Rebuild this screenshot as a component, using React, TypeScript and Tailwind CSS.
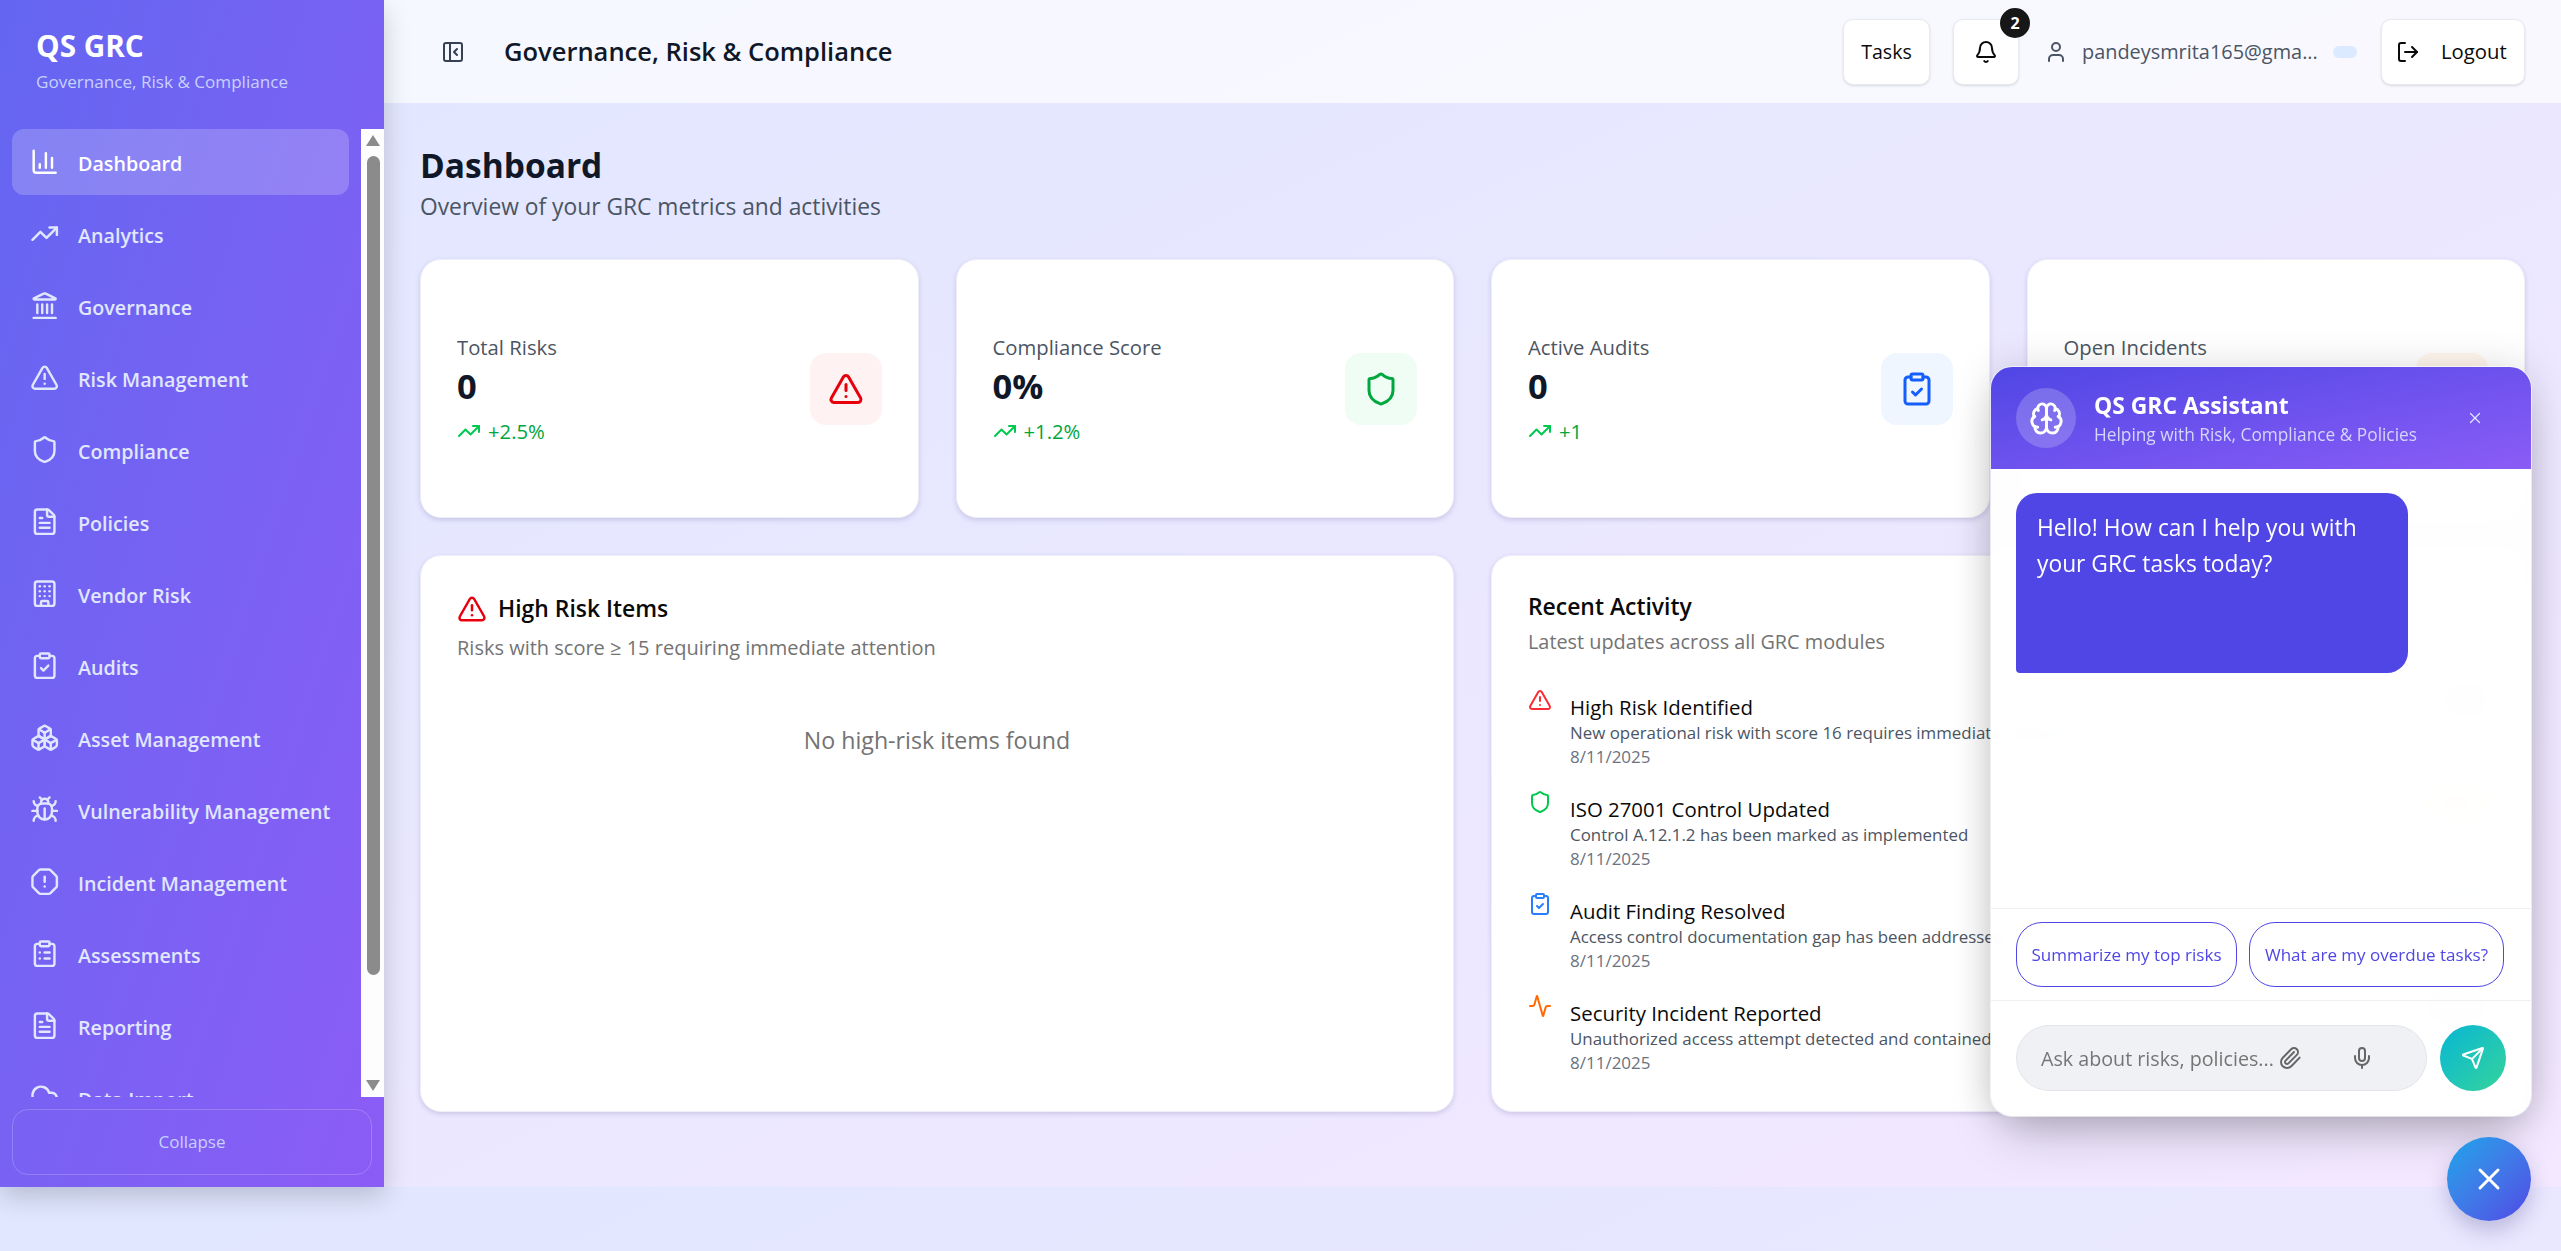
import React from "react";
import { ChartColumn, TrendingUp, Landmark, TriangleAlert, Shield, FileText, Building, ClipboardCheck, Boxes, Bug, OctagonAlert, ClipboardList, CloudUpload, PanelLeftClose, Bell, User, LogOut, Brain, Paperclip, Mic, Send, X, Activity } from "lucide-react";

const nav = [
  ["Dashboard", ChartColumn], ["Analytics", TrendingUp], ["Governance", Landmark], ["Risk Management", TriangleAlert],
  ["Compliance", Shield], ["Policies", FileText], ["Vendor Risk", Building], ["Audits", ClipboardCheck],
  ["Asset Management", Boxes], ["Vulnerability Management", Bug], ["Incident Management", OctagonAlert],
  ["Assessments", ClipboardList], ["Reporting", FileText], ["Data Import", CloudUpload],
] as const;

const stats = [
  { t: "Total Risks", v: "0", d: "+2.5%", I: TriangleAlert, bg: "bg-[#fef2f2]", c: "text-[#e7000b]" },
  { t: "Compliance Score", v: "0%", d: "+1.2%", I: Shield, bg: "bg-[#f0fdf4]", c: "text-[#00a63e]" },
  { t: "Active Audits", v: "0", d: "+1", I: ClipboardCheck, bg: "bg-[#eff6ff]", c: "text-[#155dfc]" },
  { t: "Open Incidents", v: "0", d: "-1", I: Activity, bg: "bg-[#fff7ed]", c: "text-[#f54900]" },
];

const activity = [
  { t: "High Risk Identified", d: "New operational risk with score 16 requires immediate attention", I: TriangleAlert, c: "text-[#fb2c36]", b: "bg-[#ffd0d0] w-[44px]" },
  { t: "ISO 27001 Control Updated", d: "Control A.12.1.2 has been marked as implemented", I: Shield, c: "text-[#00c950]", b: "bg-[#ffe6c8] w-[64px]" },
  { t: "Audit Finding Resolved", d: "Access control documentation gap has been addressed", I: ClipboardCheck, c: "text-[#2b7fff]", b: "bg-[#d0fadd] w-[44px]" },
  { t: "Security Incident Reported", d: "Unauthorized access attempt detected and contained", I: Activity, c: "text-[#ff6900]", b: "bg-[#ffd0d0] w-[64px]" },
];

function Sidebar() {
  return (
    <aside className="w-[384px] h-[1187px] shrink-0 flex flex-col bg-linear-to-br from-[#6366f1] to-[#8b5cf6] shadow-[0_10px_25px_rgba(0,0,0,0.18)] z-10">
      <div className="h-[129px] shrink-0 pl-[36px] pt-[27px]">
        <div className="text-[29.7px] leading-[38px] font-bold text-white">QS GRC</div>
        <div className="text-[17.1px] leading-[22px] mt-[6px] text-[#c7d2fe]">Governance, Risk &amp; Compliance</div>
      </div>
      <div className="flex-1 flex min-h-0">
        <nav className="flex-1 overflow-hidden flex flex-col gap-[6px] pl-[12px] pr-[12px]">
          {nav.map(([label, Icon], i) => (
            <div key={label} className={`h-[66px] shrink-0 flex items-center gap-[18.67px] pl-[18px] rounded-[12px] text-[19.7px] font-semibold ${i === 0 ? "bg-white/20 text-white" : "text-[#e0e7ff]"}`}>
              <Icon className="size-[29.33px] shrink-0" strokeWidth={2} />
              <span className="relative top-[1.5px]">{label}</span>
            </div>
          ))}
        </nav>
        <div className="w-[23px] shrink-0 bg-[#fdfdfe] flex flex-col items-center pl-[1px]">
          <div className="mt-[6px] w-0 h-0 border-x-[7px] border-x-transparent border-b-[11px] border-b-[#8b8b8b]" />
          <div className="mt-[10px] w-[13px] h-[819px] rounded-full bg-[#8b8b8b]" />
          <div className="mt-[105px] w-0 h-0 border-x-[7px] border-x-transparent border-t-[11px] border-t-[#8b8b8b]" />
        </div>
      </div>
      <div className="h-[90px] shrink-0 px-[12px] pt-[12px]">
        <button className="w-full h-[66px] rounded-[16px] border border-white/20 text-[17px] text-[#c7d2fe]">Collapse</button>
      </div>
    </aside>
  );
}

function Header() {
  return (
    <header className="h-[103px] shrink-0 bg-white/70 flex items-center pl-[57px] pr-[36px]">
      <PanelLeftClose className="size-[24px] text-[#364153]" strokeWidth={2} />
      <h1 className="ml-[39px] text-[25.5px] font-semibold text-[#101828]">Governance, Risk &amp; Compliance</h1>
      <div className="ml-auto flex items-center">
        <button className="w-[87px] h-[66px] rounded-[10px] bg-white border border-[#e9e9f2] shadow-sm text-[19.6px] font-medium text-[#0a0a0a]">Tasks</button>
        <button className="relative ml-[23px] w-[66px] h-[66px] rounded-[10px] bg-white border border-[#e9e9f2] shadow-sm flex items-center justify-center">
          <Bell className="size-[24px] text-[#0a0a0a]" />
          <span className="absolute top-[-12px] right-[-12px] size-[30px] rounded-full bg-[#171717] text-white text-[16px] font-bold flex items-center justify-center">2</span>
        </button>
        <User className="ml-[25px] size-[24px] text-[#4b5563]" />
        <span className="ml-[14px] w-[236px] text-[19.9px] text-[#4b5563] whitespace-nowrap">pandeysmrita165@gma...</span>
        <span className="ml-[15px] w-[24px] h-[12px] rounded-full bg-[#dbeafe]" />
        <button className="ml-[24px] w-[144px] h-[66px] rounded-[10px] bg-white border border-[#e9e9f2] shadow-sm flex items-center pl-[14px] gap-[21px] text-[20.3px] font-medium text-[#0a0a0a]">
          <LogOut className="size-[24px]" />
          <span>Logout</span>
        </button>
      </div>
    </header>
  );
}

function Stat({ s }: { s: (typeof stats)[number] }) {
  return (
    <div className="h-[259px] rounded-[21px] bg-white border border-[#f0eff8] shadow-[0_2px_5px_rgba(60,50,120,0.18)] pl-[36px] pr-[36px] flex items-center justify-between">
      <div>
        <div className="text-[20.3px] leading-[26px] font-medium text-[#4b5563]">{s.t}</div>
        <div className="text-[34.5px] leading-[42px] mt-[5px] font-bold text-[#101828]">{s.v}</div>
        <div className="mt-[11px] flex items-center gap-[7px] text-[20.3px] leading-[26px] text-[#00a63e]">
          <TrendingUp className="size-[24px] text-[#00c950]" />
          <span>{s.d}</span>
        </div>
      </div>
      <div className={`size-[72px] rounded-[16px] flex items-center justify-center ${s.bg}`}>
        <s.I className={`size-[36px] ${s.c}`} />
      </div>
    </div>
  );
}

function Main() {
  return (
    <main className="flex-1 min-h-0 px-[36px] pt-[39px]">
      <h2 className="text-[33.5px] leading-[46px] font-bold text-[#101828]">Dashboard</h2>
      <p className="text-[22.8px] leading-[30px] mt-[4px] text-[#4b5563]">Overview of your GRC metrics and activities</p>
      <div className="grid grid-cols-4 gap-[37px] mt-[37px]">
        {stats.map((s) => <Stat key={s.t} s={s} />)}
      </div>
      <div className="grid grid-cols-2 gap-[37px] mt-[37px]">
        <section className="h-[557px] rounded-[21px] bg-white border border-[#f0eff8] shadow-[0_2px_5px_rgba(60,50,120,0.18)] px-[36px] pt-[38px]">
          <div className="flex items-center gap-[11px]">
            <TriangleAlert className="size-[30px] text-[#e7000b]" />
            <span className="text-[22.9px] leading-[30px] font-semibold text-[#0a0a0a]">High Risk Items</span>
          </div>
          <p className="text-[20px] leading-[26px] mt-[11px] text-[#737373]">Risks with score ≥ 15 requiring immediate attention</p>
          <p className="text-[23.2px] leading-[30px] mt-[64px] text-center text-[#737373]">No high-risk items found</p>
        </section>
        <section className="h-[557px] rounded-[21px] bg-white border border-[#f0eff8] shadow-[0_2px_5px_rgba(60,50,120,0.18)] px-[36px] pt-[36px]">
          <div className="text-[22.9px] leading-[30px] font-semibold text-[#0a0a0a]">Recent Activity</div>
          <p className="text-[19.85px] leading-[26px] mt-[7px] text-[#737373]">Latest updates across all GRC modules</p>
          <div className="mt-[31px] flex flex-col">
            {activity.map((a) => (
              <div key={a.t} className="h-[102px] flex items-start gap-[18px]">
                <a.I className={`size-[24px] shrink-0 mt-[2px] ${a.c}`} />
                <div className="flex-1 min-w-0 whitespace-nowrap">
                  <div className="text-[20.4px] leading-[26px] font-medium text-[#0a0a0a] mt-[8px]">{a.t}</div>
                  <div className="text-[16.9px] leading-[24px] text-[#4b5563] mt-[1px]">{a.d}</div>
                  <div className="text-[17px] leading-[24px] text-[#6b7280]">8/11/2025</div>
                </div>
                <div className={`h-[28px] rounded-full ${a.b}`} />
              </div>
            ))}
          </div>
        </section>
      </div>
    </main>
  );
}

function Chat() {
  return (
    <div className="absolute left-[1991px] top-[367px] w-[540px] h-[749px] rounded-[21px] overflow-hidden bg-white/95 backdrop-blur-md ring-1 ring-white/60 shadow-[0_25px_50px_-12px_rgba(0,0,0,0.25),0_0_40px_rgba(0,0,0,0.14)] flex flex-col z-20">
      <div className="h-[102px] shrink-0 bg-linear-to-br from-[#4f46e5] to-[#8b5cf6] flex items-center pl-[25px] pr-[47px]">
        <div className="size-[60px] rounded-full bg-white/20 flex items-center justify-center">
          <Brain className="size-[35px] text-white" />
        </div>
        <div className="ml-[18px] flex-1">
          <div className="text-[22.9px] leading-[28px] font-bold text-white mt-[2px]">QS GRC Assistant</div>
          <div className="text-[17.3px] leading-[24px] mt-[3px] text-[#d4d6fb]">Helping with Risk, Compliance &amp; Policies</div>
        </div>
        <X className="size-[18px] text-[#e0e7ff]" strokeWidth={1.6} />
      </div>
      <div className="flex-1 min-h-0 px-[25px] pt-[24px]">
        <div className="w-[392px] h-[180px] rounded-[21px] rounded-bl-[4px] bg-[#4f46e5] px-[21px] pt-[17px] text-[22.8px] leading-[36px] text-white">
          Hello! How can I help you with your GRC tasks today?
        </div>
      </div>
      <div className="h-[92px] shrink-0 border-t border-[#f0f0f4] flex items-center gap-[12px] px-[25px]">
        <button className="w-[221px] h-[65px] rounded-[26px] border-[1.5px] border-[#4f46e5] bg-white text-[17px] text-[#4f46e5]">Summarize my top risks</button>
        <button className="w-[255px] h-[65px] rounded-[26px] border-[1.5px] border-[#4f46e5] bg-white text-[17px] text-[#4f46e5]">What are my overdue tasks?</button>
      </div>
      <div className="h-[116px] shrink-0 border-t border-[#f0f0f4] flex items-start gap-[13px] px-[25px] pt-[24px]">
        <div className="w-[411px] h-[66px] rounded-[33px] bg-[#f0f1f5] border border-[#e3e4ea] flex items-center pl-[24px] text-[19.7px] text-[#757575]">
          <span className="w-[237px] whitespace-nowrap relative top-[1px]">Ask about risks, policies...</span>
          <Paperclip className="size-[24px] text-[#666666]" />
          <Mic className="ml-[48px] size-[24px] text-[#666666]" />
        </div>
        <button className="size-[66px] rounded-full bg-linear-to-br from-[#06b6d4] to-[#34d399] flex items-center justify-center">
          <Send className="size-[24px] text-white" />
        </button>
      </div>
    </div>
  );
}

export default function App() {
  return (
    <div className="relative w-[2561px] h-[1251px] overflow-hidden flex bg-linear-to-br from-[#e0e7ff] to-[#f3e8ff] bg-[length:100%_1187px] font-['Open_Sans',sans-serif]">
      <Sidebar />
      <div className="flex-1 min-w-0 flex flex-col">
        <Header />
        <Main />
      </div>
      <Chat />
      <button className="absolute left-[2447px] top-[1137px] size-[84px] rounded-full bg-linear-to-br from-[#0ea5e9] to-[#4f46e5] shadow-[0_10px_20px_rgba(60,50,120,0.25)] flex items-center justify-center z-20">
        <X className="size-[36px] text-white" />
      </button>
    </div>
  );
}
